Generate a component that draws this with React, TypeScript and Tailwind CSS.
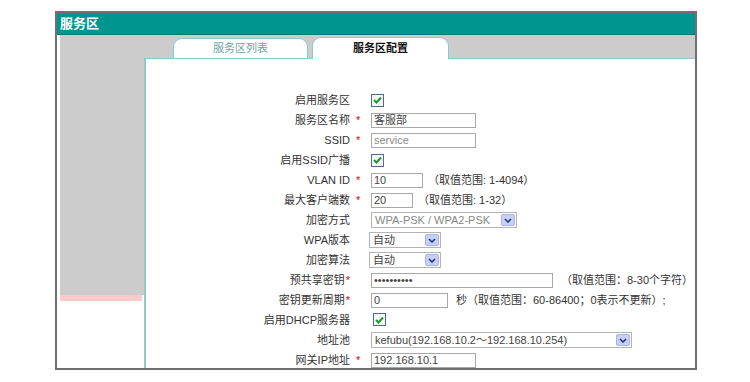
import React from 'react';

const Check = () => (
  <span className="inline-flex w-[13px] h-[13px] border border-[#4d6b8a] bg-[#f4f8fb] items-center justify-center">
    <svg width="9" height="8" viewBox="0 0 9 8">
      <path d="M1 4 L3.5 6.5 L8 1.5" fill="none" stroke="#1e9a2a" strokeWidth="2" />
    </svg>
  </span>
);

const Input: React.FC<{ w: string; value?: string; gray?: boolean }> = ({ w, value, gray }) => (
  <span className={`inline-flex items-center h-[15px] border border-[#a8a8a8] bg-white px-[2px] text-[11px] leading-none ${gray ? 'text-[#888]' : 'text-[#444]'} ${w}`}>
    {value}
  </span>
);

const Select: React.FC<{ w: string; value: string; gray?: boolean }> = ({ w, value, gray }) => (
  <span className={`inline-flex items-center justify-between h-[16px] border border-[#b4b4b4] bg-white pl-[3px] pr-[1px] text-[11px] leading-none ${gray ? 'text-[#888]' : 'text-[#444]'} ${w}`}>
    <span>{value}</span>
    <span className="w-[14px] h-[12px] rounded-[2px] bg-[#c8cff6] border border-[#aab3e8] flex items-center justify-center">
      <svg width="8" height="5" viewBox="0 0 8 5">
        <path d="M1 1 L4 4 L7 1" fill="none" stroke="#1f3a7a" strokeWidth="1.6" />
      </svg>
    </span>
  </span>
);

const Row: React.FC<{ label: string; req?: boolean; tight?: boolean; children: React.ReactNode }> = ({ label, req, tight, children }) => (
  <div className="flex items-center h-[20px]">
    <div className="w-[204px] text-right text-[#333] shrink-0">
      {label}
      {tight && <span className="text-[#e00000] ml-[1px]">*</span>}
    </div>
    <div className="w-[21px] shrink-0 pl-[6px] text-[#e00000]">{req && !tight ? '*' : ''}</div>
    <div className="flex items-center text-[#333]">{children}</div>
  </div>
);

export default function App() {
  return (
    <div className="w-[750px] h-[382px] bg-white pt-[11px] pl-[55px] text-[11px]" style={{ fontFamily: '"Liberation Sans", "Noto Sans CJK SC", sans-serif' }}>
      <div className="w-[642px] h-[359px] border-2 border-[#707070] flex flex-col overflow-hidden">
        {/* Header */}
        <div className="h-[22px] bg-[#009690] border-b border-[#007c77] flex items-center pl-[3px] shrink-0">
          <span className="text-white font-bold text-[13px]">服务区</span>
        </div>

        <div className="flex flex-1">
          {/* Left sidebar */}
          <div className="w-[87px] shrink-0 flex flex-col border-l-[3px] border-white">
            <div className="h-[260px] bg-[#cccccc]"></div>
            <div className="h-[6px] bg-[#ffcaca] mr-[2px]"></div>
            <div className="flex-1 bg-white"></div>
          </div>

          <div className="flex-1 flex flex-col">
            {/* Tabs strip */}
            <div className="h-[24px] bg-[#cccccc] flex items-end pl-[29px] gap-[4px] border-b border-[#86cccc] shrink-0">
              <div className="w-[135px] h-[20px] bg-white border border-b-0 border-[#86cccc] rounded-t-[9px] flex items-center justify-center text-[#6aa6a0]">
                服务区列表
              </div>
              <div className="w-[137px] h-[22px] -mb-px bg-white border border-b-0 border-[#86cccc] rounded-t-[9px] flex items-center justify-center font-bold text-[#111]">
                服务区配置
              </div>
            </div>

            {/* Content */}
            <div className="flex-1 bg-white border-l-2 border-[#8ccaca] pt-[31px]">
              <Row label="启用服务区"><Check /></Row>
              <Row label="服务区名称" req><Input w="w-[105px]" value="客服部" /></Row>
              <Row label="SSID" req><Input w="w-[105px]" value="service" gray /></Row>
              <Row label="启用SSID广播"><Check /></Row>
              <Row label="VLAN ID" req>
                <Input w="w-[52px]" value="10" />
                <span className="ml-[5px]">（取值范围: 1-4094）</span>
              </Row>
              <Row label="最大客户端数" req>
                <Input w="w-[42px]" value="20" />
                <span className="ml-[5px]">（取值范围: 1-32）</span>
              </Row>
              <Row label="加密方式"><Select w="w-[146px]" value="WPA-PSK / WPA2-PSK" gray /></Row>
              <Row label="WPA版本"><span className="-ml-[2px]"><Select w="w-[72px]" value="自动" /></span></Row>
              <Row label="加密算法"><span className="-ml-[2px]"><Select w="w-[72px]" value="自动" /></span></Row>
              <Row label="预共享密钥" req tight>
                <Input w="w-[182px]" value="••••••••••" />
                <span className="ml-[8px]">（取值范围：8-30个字符）</span>
              </Row>
              <Row label="密钥更新周期" req tight>
                <Input w="w-[77px]" value="0" />
                <span className="ml-[8px]">秒（取值范围：60-86400；0表示不更新）;</span>
              </Row>
              <Row label="启用DHCP服务器"><span className="ml-[2px]"><Check /></span></Row>
              <Row label="地址池"><Select w="w-[261px]" value="kefubu(192.168.10.2～192.168.10.254)" /></Row>
              <Row label="网关IP地址" req><Input w="w-[105px]" value="192.168.10.1" /></Row>
            </div>
          </div>
        </div>
      </div>
    </div>
  );
}
